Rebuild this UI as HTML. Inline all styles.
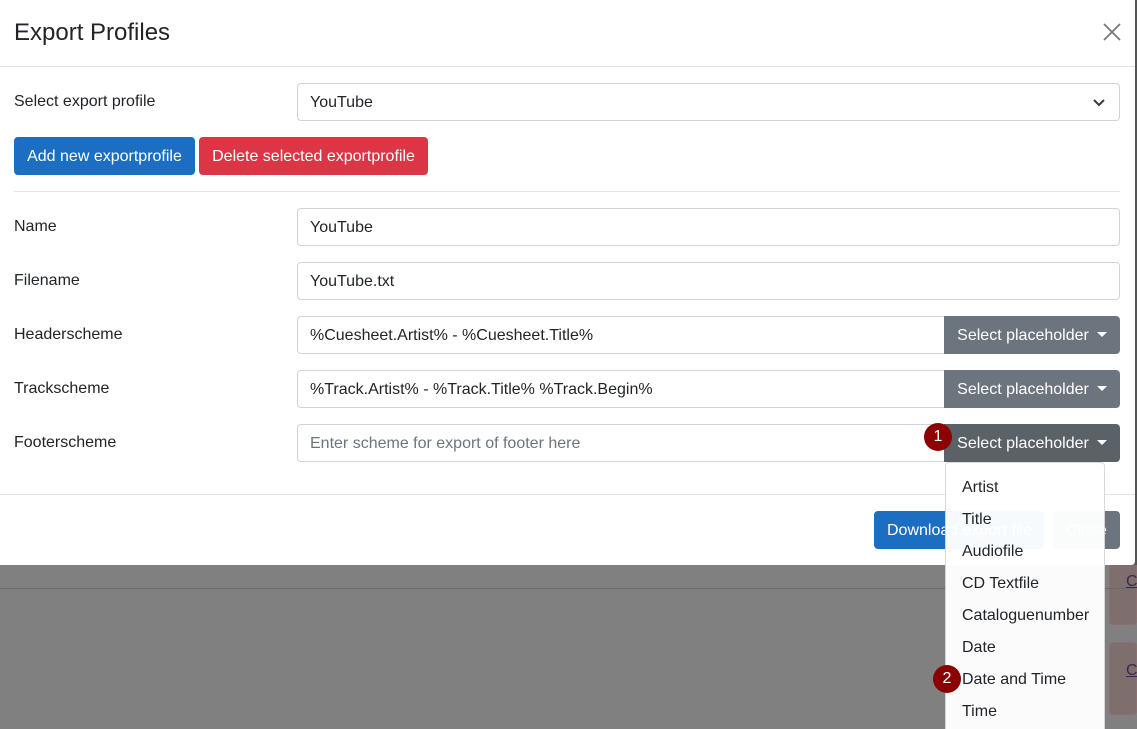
<!DOCTYPE html>
<html style="overflow:hidden;width:1137px;height:729px"><head><style>
*{box-sizing:border-box;margin:0;padding:0}
body{width:1137px;height:729px;overflow:hidden;background:#808080;font-family:"Liberation Sans",sans-serif;font-size:16px;color:#212529;position:relative}
.a{position:absolute}
.modal{left:0;top:0;width:1135px;height:565px;background:#fff;border-radius:0 0 4px 0}
.lbl{left:14px;color:#212529}
.inp{left:297px;height:38px;border:1px solid #ced4da;border-radius:4px;padding:0 12px;line-height:38px;background:#fff}
.btn{height:38px;line-height:39px;color:#fff;border-radius:4px;text-align:center}
.sec{background:#6c757d;left:944px;width:176px;border-radius:0 4px 4px 0}
.car{display:inline-block;width:0;height:0;border-left:5px solid transparent;border-right:5px solid transparent;border-top:5px solid #fff;vertical-align:middle;margin-left:8px;margin-top:-2px}
.hr{left:0;width:1135px;height:1px;background:#dee2e6}
.dd{left:945px;top:462px;width:160px;height:267px;background:rgba(255,255,255,.97);border:1px solid rgba(0,0,0,.15);border-bottom:none;border-radius:4px 4px 0 0}
.dd div{position:absolute;left:16px}
.badge{width:28px;height:28px;border-radius:50%;background:#8b0000;color:#fff;font-size:16px;text-align:center;line-height:28px}
</style></head><body>
<div class="a" style="left:1109px;top:545px;width:28px;height:80px;background:#7f6e6e;border-radius:4px;border:1px solid #8a7070"></div>
<div class="a" style="left:1126px;top:573px;color:#3a2a4a;text-decoration:underline">C</div>
<div class="a" style="left:1109px;top:642px;width:28px;height:73px;background:#7f6e6e;border-radius:4px;border:1px solid #8a7070"></div>
<div class="a" style="left:1126px;top:662px;color:#3a2a4a;text-decoration:underline">C</div>
<div class="a hr" style="top:588px;background:#6a6a6a"></div>
<div class="a" style="left:1135px;top:0;width:2px;height:565px;background:#555"></div>

<div class="a modal"></div>
<div class="a" style="left:14px;top:19px;font-size:24px">Export Profiles</div>
<svg class="a" style="left:1103px;top:23px" width="18" height="18"><path d="M1 1L17 17M17 1L1 17" stroke="#777" stroke-width="1.8"/></svg>
<div class="a hr" style="top:66px"></div>

<div class="a lbl" style="top:93px">Select export profile</div>
<div class="a inp" style="top:83px;width:823px">YouTube</div>
<svg class="a" style="left:1092px;top:98px" width="14" height="10"><path d="M2 2L7 7L12 2" stroke="#343a40" stroke-width="2" fill="none"/></svg>

<div class="a btn" style="left:14px;top:137px;width:181px;background:#1b6ec2">Add new exportprofile</div>
<div class="a btn" style="left:199px;top:137px;width:229px;background:#dc3545">Delete selected exportprofile</div>
<div class="a hr" style="top:191px;left:14px;width:1106px;background:#e5e5e5"></div>

<div class="a lbl" style="top:218px">Name</div>
<div class="a inp" style="top:208px;width:823px">YouTube</div>
<div class="a lbl" style="top:272px">Filename</div>
<div class="a inp" style="top:262px;width:823px">YouTube.txt</div>
<div class="a lbl" style="top:326px">Headerscheme</div>
<div class="a inp" style="top:316px;width:650px;border-radius:4px 0 0 4px">%Cuesheet.Artist% - %Cuesheet.Title%</div>
<div class="a btn sec" style="top:316px">Select placeholder<span class="car"></span></div>
<div class="a lbl" style="top:380px">Trackscheme</div>
<div class="a inp" style="top:370px;width:650px;border-radius:4px 0 0 4px">%Track.Artist% - %Track.Title% %Track.Begin%</div>
<div class="a btn sec" style="top:370px">Select placeholder<span class="car"></span></div>
<div class="a lbl" style="top:434px">Footerscheme</div>
<div class="a inp" style="top:424px;width:650px;border-radius:4px 0 0 4px;color:#6c757d">Enter scheme for export of footer here</div>
<div class="a btn sec" style="top:424px;background:#5a6268">Select placeholder<span class="car"></span></div>

<div class="a hr" style="top:494px"></div>
<div class="a btn" style="left:874px;top:511px;width:170px;background:#1b6ec2;text-align:left;padding-left:13px">Download export file</div>
<div class="a btn" style="left:1053px;top:511px;width:67px;background:#6c757d">Close</div>

<div class="a dd">
<div style="top:16px">Artist</div>
<div style="top:48px">Title</div>
<div style="top:80px">Audiofile</div>
<div style="top:112px">CD Textfile</div>
<div style="top:144px">Cataloguenumber</div>
<div style="top:176px">Date</div>
<div style="top:208px">Date and Time</div>
<div style="top:240px">Time</div>
</div>
<div class="a badge" style="left:924px;top:423px">1</div>
<div class="a badge" style="left:933px;top:665px">2</div>
</body></html>
